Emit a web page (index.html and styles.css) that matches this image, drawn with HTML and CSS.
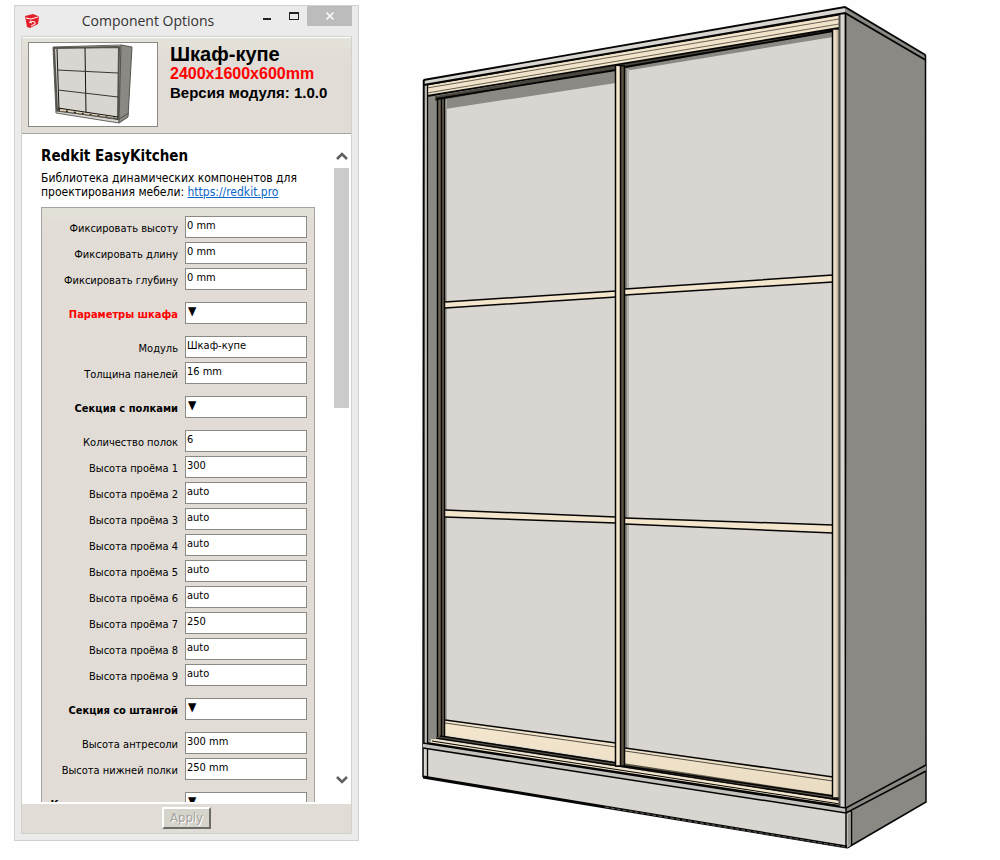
FILE: index.html
```html
<!DOCTYPE html>
<html lang="ru">
<head>
<meta charset="utf-8">
<meta name="viewport" content="width=device-width, initial-scale=1">
<title>Component Options</title>
<link rel="stylesheet" href="styles.css">
</head>
<body>
<main class="workspace">
  <section class="dialog" aria-labelledby="dialog-title">
    <header class="titlebar">
      <svg class="app-icon" viewBox="0 0 14 15" aria-hidden="true">
        <path fill="#e3202a" d="M0 2 8 0l5 2 1 1-1 7-8 4-3-1z"/>
        <path fill="none" stroke="#fff" stroke-width="1" d="M1 4l5 1 7-2M5 7l5 1v2l-4 2M4 8l3 1"/>
      </svg>
      <h1 class="title" id="dialog-title">Component Options</h1>
      <div class="window-buttons">
        <button class="win-btn" type="button" aria-label="Minimize"><svg viewBox="0 0 10 10"><path fill="#222" d="M1 7h8v2H1z"/></svg></button>
        <button class="win-btn" type="button" aria-label="Maximize"><svg viewBox="0 0 10 10"><path fill="#222" d="M0 1h10v8H0zM1 3v5h8V3z" fill-rule="evenodd"/></svg></button>
        <button class="win-btn win-close" type="button" aria-label="Close"><svg viewBox="0 0 10 10"><path fill="none" stroke="#fff" stroke-width="1.500" d="M1.500 1.500l7 7M8.500 1.500l-7 7"/></svg></button>
      </div>
    </header>
    <div class="client">
      <div class="summary">
        <svg class="thumb" viewBox="0 0 128 83" role="img" aria-label="Шкаф-купе">
          <g stroke="#282620" stroke-width="1" stroke-linejoin="round">
            <path fill="#d9d6d1" stroke="#66645e" d="M24 4 92 2l-2 78-63-10z"/>
            <path fill="#8a8984" stroke="#55544f" d="M92 2l11 2-4 70-9 6z"/>
            <path fill="none" stroke="#55534c" stroke-width="2" d="M25 5l65-1-1 72-61-9z"/>
            <path fill="none" stroke="#14130f" d="M28 6l2 61 59 9M56 5l1 65"/>
            <path fill="none" stroke="#39362f" d="M28 27l61 3M29 47l60 7"/>
            <path fill="none" stroke="#e4d4b3" stroke-width="2" stroke-dasharray="6 2" d="M31 67l57 8"/>
            <path fill="none" stroke="#14130f" d="M29 65l60 9"/>
            <path fill="none" stroke="#55544f" d="M27 68l63 8 10-6"/>
          </g>
        </svg>
        <div class="summary-text">
          <h2 class="name">Шкаф-купе</h2>
          <p class="size">2400x1600x600mm</p>
          <p class="version">Версия модуля: 1.0.0</p>
        </div>
      </div>
      <div class="scroll-area">
        <div class="content">
          <h3 class="product">Redkit EasyKitchen</h3>
          <p class="about">Библиотека динамических компонентов для проектирования мебели: <a href="https://redkit.pro">https://redkit.pro</a></p>
          <form class="options" id="options">
            <div class="row"><label for="f1">Фиксировать высоту</label><input id="f1" type="text" value="0 mm"></div>
            <div class="row"><label for="f2">Фиксировать длину</label><input id="f2" type="text" value="0 mm"></div>
            <div class="row"><label for="f3">Фиксировать глубину</label><input id="f3" type="text" value="0 mm"></div>
            <div class="row group accent"><label for="g1">Параметры шкафа</label><select id="g1"><option>▼</option></select></div>
            <div class="row"><label for="f4">Модуль</label><input id="f4" type="text" value="Шкаф-купе"></div>
            <div class="row"><label for="f5">Толщина панелей</label><input id="f5" type="text" value="16 mm"></div>
            <div class="row group"><label for="g2">Секция с полками</label><select id="g2"><option>▼</option></select></div>
            <div class="row"><label for="f6">Количество полок</label><input id="f6" type="text" value="6"></div>
            <div class="row"><label for="h1">Высота проёма 1</label><input id="h1" type="text" value="300"></div>
            <div class="row"><label for="h2">Высота проёма 2</label><input id="h2" type="text" value="auto"></div>
            <div class="row"><label for="h3">Высота проёма 3</label><input id="h3" type="text" value="auto"></div>
            <div class="row"><label for="h4">Высота проёма 4</label><input id="h4" type="text" value="auto"></div>
            <div class="row"><label for="h5">Высота проёма 5</label><input id="h5" type="text" value="auto"></div>
            <div class="row"><label for="h6">Высота проёма 6</label><input id="h6" type="text" value="auto"></div>
            <div class="row"><label for="h7">Высота проёма 7</label><input id="h7" type="text" value="250"></div>
            <div class="row"><label for="h8">Высота проёма 8</label><input id="h8" type="text" value="auto"></div>
            <div class="row"><label for="h9">Высота проёма 9</label><input id="h9" type="text" value="auto"></div>
            <div class="row group"><label for="g3">Секция со штангой</label><select id="g3"><option>▼</option></select></div>
            <div class="row"><label for="f7">Высота антресоли</label><input id="f7" type="text" value="300 mm"></div>
            <div class="row"><label for="f8">Высота нижней полки</label><input id="f8" type="text" value="250 mm"></div>
            <div class="row group"><label for="g4">Комплектация секции</label><select id="g4"><option>▼</option></select></div>
          </form>
        </div>
        <div class="scrollbar">
          <button class="scroll-btn" type="button" aria-label="Вверх"><svg viewBox="0 0 12 10"><path fill="none" stroke="#606060" stroke-width="2.600" d="M1 8l5-5 5 5"/></svg></button>
          <div class="scroll-track"><div class="scroll-thumb"></div></div>
          <button class="scroll-btn" type="button" aria-label="Вниз"><svg viewBox="0 0 12 10"><path fill="none" stroke="#606060" stroke-width="2.600" d="M1 2l5 5 5-5"/></svg></button>
        </div>
      </div>
      <footer class="footer"><button class="apply" type="submit" form="options" disabled>Apply</button></footer>
    </div>
  </section>

  <svg class="model" viewBox="415 0 585 860" role="img" aria-label="Модель шкафа-купе">
    <defs>
      <linearGradient id="post"><stop offset="0" stop-color="#f3e6cc"/><stop offset="0.500" stop-color="#e6d8c0"/><stop offset="1" stop-color="#a3977f"/></linearGradient>
      <linearGradient id="rail" x2="0" y2="1"><stop offset="0" stop-color="#f5e7ce"/><stop offset="1" stop-color="#eadcc3"/></linearGradient>
    </defs>
    <path fill="#8a8984" d="M845 7l80 48 1 747-79 46z"/>
    <path fill="#d9d6d1" d="M423 80L845 7l2 841-424-71z"/>
    <path fill="#8a8984" d="M427 94h10v644l-10 5z"/>
    <path fill="#8a8984" d="M445 99L616 70v13L445 109zM625 67l208-35v5L625 71z"/>
    <path fill="#6c6250" d="M437 98h7v639h-7z"/>
    <path fill="#a5a39e" d="M445 98h2v622h-2z"/>
    <path fill="#4d483f" d="M435 96L833 28v4L435 101z"/>
    <path fill="#f1e4ca" d="M427 85L839 15v13L427 96z"/>
    <path fill="#8a8984" d="M625 69h2v679h-2z"/>
    <path fill="#b4b1ac" d="M627 69h2v679h-2z"/>
    <path fill="#f3e6cc" d="M445 302l171-11v6l-171 11zM625 289l208-14v7l-208 13zM445 510l171 7v6l-171-6zM625 518l208 7v8l-208-9z"/>
    <path fill="url(#rail)" d="M445 720l171 23v18l-171-26zM625 748l208 29v19l-208-30z"/>
    <path fill="#5b5548" d="M438 735l402 61v5l-402-62z"/>
    <path fill="#f1e4ca" d="M431 739l409 62v6l-409-63z"/>
    <g fill="none" stroke="#050505" stroke-width="1.500">
      <path d="M445 302l171-11M445 308l171-11M625 289l208-14M625 295l208-13M445 510l171 7M445 517l171 6M625 518l208 7M625 524l208 9"/>
      <path d="M445 720l171 23M625 748l208 29M440 736l177 27M625 766l208 30"/>
      <path stroke="#2c2922" stroke-width="0.800" d="M445 723l171 24M625 751l208 30"/>
      <path stroke-width="1.800" d="M427 96L839 28M436 99L616 70M625 67l208-36"/>
      <path stroke-width="1.200" d="M427 85L839 15"/>
      <path stroke="#2c2922" stroke-width="0.700" d="M427 88L839 19M427 93L839 24"/>
      <path stroke-width="1.400" d="M436 738l404 62"/>
      <path stroke-width="1" d="M432 741l408 63"/>
      <path stroke-width="1.800" d="M427 743l413 63"/>
    </g>
    <path fill="#f3e6cc" d="M616 65h5v701h-5z"/>
    <path fill="#5a5141" d="M621 65h4v702l-4-1z"/>
    <path fill="url(#post)" d="M833 29h6v769h-6z"/>
    <path fill="#d9d6d1" d="M840 14h5v793h-5z"/>
    <g fill="none" stroke="#050505" stroke-width="1.500">
      <path d="M437.500 98v639M441.500 98v639M444.500 98v639M615.500 65v701M620.500 65v701M624.500 66v701M615 65l10 1M615 766h10"/>
      <path d="M832.500 30v767M833 29h7M832 798h8"/>
      <path stroke="#4c4a45" stroke-width="2" d="M839.500 15v791"/>
      <path stroke-width="1.800" d="M845.500 13v794"/>
      <path stroke-width="1.300" d="M424 80v663M427.500 85v658M427.500 749v29"/>
      <path stroke="#a2a19b" stroke-width="1" d="M426 86v656"/>
      <path stroke-width="1.800" d="M423.500 80L845 7l80.500 48M423.500 85L845 13l80.500 47"/>
      <path stroke-width="1.500" d="M925.500 55l.5 747L847 848M423.500 80l-.5 697"/>
    </g>
    <path fill="#c4c2bd" d="M423 743l423 65v5L423 748z"/>
    <path fill="#8a8984" d="M846 807l80-42v6l-80 42z"/>
    <path fill="#bdbbb5" d="M847 814l4-2v33l-4 3z"/>
    <g fill="none" stroke="#050505" stroke-width="1.500">
      <path d="M423 743l423 65 80-43M423 748l423 65 80-42M846 807v41M851.500 811v34"/>
      <path stroke="#5f5e59" stroke-width="0.800" d="M849 814v31"/>
      <path stroke-width="3" d="M423 777l424 70"/>
      <path stroke="#817e77" stroke-width="0.800" stroke-dasharray="4 2" d="M605 807l240 40"/>
    </g>
  </svg>
</main>
</body>
</html>
```
FILE: styles.css
```css
* { box-sizing: border-box; }

body {
  margin: 0;
  background: #fefefe;
  color: #000;
  font-family: "DejaVu Sans Condensed", "DejaVu Sans", sans-serif;
}

h1, h2, h3, p { margin: 0; }

.workspace {
  display: grid;
  grid-template-columns: minmax(320px, 345px) 1fr;
  gap: 56px;
  min-height: 100vh;
  padding-left: 14px;
}

.model { display: block; width: 100%; height: auto; }

.dialog {
  display: flex;
  flex-direction: column;
  height: calc(100vh - 24px);
  margin-top: 5px;
  padding: 0 6px 6px;
  border: 1px solid #d2d1cc;
  background: #ebebeb;
}

.titlebar {
  display: flex;
  align-items: center;
  height: 30px;
  padding-left: 4px;
}

.app-icon { width: 14px; height: 15px; }

.title {
  flex: 1;
  padding-left: 4px;
  text-align: center;
  font-family: "Open Sans", "Noto Sans", sans-serif;
  font-size: 14px;
  font-weight: 400;
  line-height: 24px;
  color: #333;
}

.window-buttons { display: flex; align-self: flex-start; }

.win-btn {
  display: flex;
  align-items: center;
  justify-content: center;
  width: 27px;
  height: 20px;
  padding: 0;
  border: 0;
  background: none;
}

.win-btn svg { width: 10px; height: 10px; }
.win-close { width: 45px; background: #bcbcbc; }

.client {
  display: flex;
  flex: 1;
  flex-direction: column;
  min-height: 0;
  border: 1px solid #d2d1cc;
  background: #fff;
}

.summary {
  display: flex;
  gap: 12px;
  height: 97px;
  padding: 4px 6px;
  border-top: 1px solid #fff;
  border-bottom: 1px solid #a5a4a0;
  background: linear-gradient(#e4e2d8, #e1dcd6 24px);
}

.thumb {
  flex: none;
  width: 130px;
  height: 85px;
  border: 1px solid #8a8984;
  background: #fff;
}

.summary-text {
  padding-top: 1px;
  font-family: "Liberation Sans", Arial, sans-serif;
  font-weight: 700;
}

.name { font-size: 20px; line-height: 22px; }
.size { font-size: 16px; line-height: 18px; color: #f00; }
.version { font-size: 15px; line-height: 20px; }

.scroll-area {
  display: flex;
  flex: 1;
  justify-content: space-between;
  min-height: 0;
  margin-bottom: 2px;
  overflow: hidden;
}

.content { flex: 1; max-width: 293px; padding: 12px 0 0 19px; }
.product { font-size: 15px; line-height: 20px; }
.about { margin-top: 5px; font-size: 12px; line-height: 14px; }
.about a { color: #0a66c8; }

.options {
  display: flex;
  flex-direction: column;
  gap: 4px;
  margin-top: 8px;
  padding: 8px 7px;
  border: 1px solid #a5a4a0;
  background: linear-gradient(#e4e2d8, #e1dcd6 20px);
  font-size: 11px;
}

.row { display: flex; gap: 7px; }

.row label {
  flex: 1;
  padding-top: 4px;
  line-height: 18px;
  text-align: right;
  white-space: nowrap;
}

.row input, .row select {
  appearance: none;
  flex: none;
  width: 122px;
  height: 22px;
  padding: 0 1px 4px;
  border: 1px solid #8a8984;
  border-radius: 0;
  background: #fff;
  color: #000;
  font: inherit;
}

.row select { padding-left: 2px; font-size: 12px; }

.group { margin: 8px 0; }
.group label { font-weight: 700; }
.accent label { color: #f00; }

.scrollbar {
  display: flex;
  flex-direction: column;
  width: 15px;
  margin-right: 2px;
  padding: 10px 0;
}

.scroll-btn {
  display: flex;
  align-items: center;
  justify-content: center;
  height: 24px;
  padding: 0;
  border: 0;
  background: none;
}

.scroll-btn svg { width: 12px; height: 10px; }
.scroll-track { flex: 1; }
.scroll-thumb { height: 40%; background: #cbcbcb; }

.footer {
  display: flex;
  justify-content: center;
  padding: 3px 0 4px;
  background: #e1dcd6;
}

.apply {
  width: 49px;
  height: 22px;
  padding: 0;
  border: 2px solid;
  border-color: #fff #6b6b68 #6b6b68 #fff;
  background: #d6d3cb;
  color: #a3a29d;
  font: 400 13px/16px "DejaVu Sans Condensed", "DejaVu Sans", sans-serif;
  text-shadow: 1px 1px #fff;
}
```
